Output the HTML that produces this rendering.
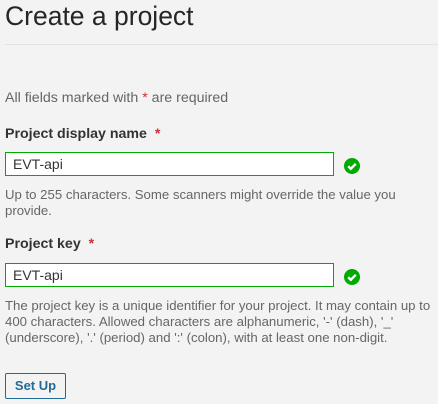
<html><head><style>
body{margin:0;background:#f3f3f3;font-family:"Liberation Sans",sans-serif;color:#333;width:438px;height:404px;overflow:hidden;position:relative}
.a{position:absolute}
h1{position:absolute;left:5px;top:1px;margin:0;font-weight:normal;font-size:26.5px;color:#262626}
.hr{position:absolute;left:5px;right:0;top:44px;height:1px;background:#e2e2e2}
.lbl{font-weight:bold;font-size:14.2px;color:#333}
.st{color:#d02f3a}
.inp{position:absolute;left:5px;height:22px;border:1px solid #00aa00;background:#fff;font-size:14px;line-height:22px;padding-left:7px;box-sizing:content-box}
.help{font-size:13.2px;color:#666;line-height:16px;width:432px}
.btn{position:absolute;left:5px;top:373px;width:59px;height:24px;border:1px solid #236a97;border-radius:2px;color:#236a97;font-weight:bold;font-size:13px;text-align:center;line-height:24px}
</style></head><body>
<h1>Create a project</h1>
<div class="hr"></div>
<div class="a" style="left:5px;top:90px;font-size:14.2px;color:#666">All fields marked with <span class="st">*</span> are required</div>
<div class="a lbl" style="left:5px;top:126px">Project display name <span class="st">&nbsp;*</span></div>
<div class="inp" style="top:152px;width:320px">EVT-api</div>
<svg class="a" style="left:344px;top:158px" width="16" height="16" viewBox="0 0 16 16"><circle cx="8" cy="8" r="8" fill="#00aa00"/><path d="M4.2 8.3l2.6 2.5 5-5" stroke="#fff" stroke-width="2.4" fill="none"/></svg>
<div class="a help" style="left:5px;top:187px">Up to 255 characters. Some scanners might override the value you provide.</div>
<div class="a lbl" style="left:5px;top:236px">Project key <span class="st">&nbsp;*</span></div>
<div class="inp" style="top:263px;width:320px">EVT-api</div>
<svg class="a" style="left:344px;top:269px" width="16" height="16" viewBox="0 0 16 16"><circle cx="8" cy="8" r="8" fill="#00aa00"/><path d="M4.2 8.3l2.6 2.5 5-5" stroke="#fff" stroke-width="2.4" fill="none"/></svg>
<div class="a help" style="left:5px;top:298px">The project key is a unique identifier for your project. It may contain up to 400 characters. Allowed characters are alphanumeric, '-' (dash), '_' (underscore), '.' (period) and ':' (colon), with at least one non-digit.</div>
<div class="btn">Set Up</div>
</body></html>
